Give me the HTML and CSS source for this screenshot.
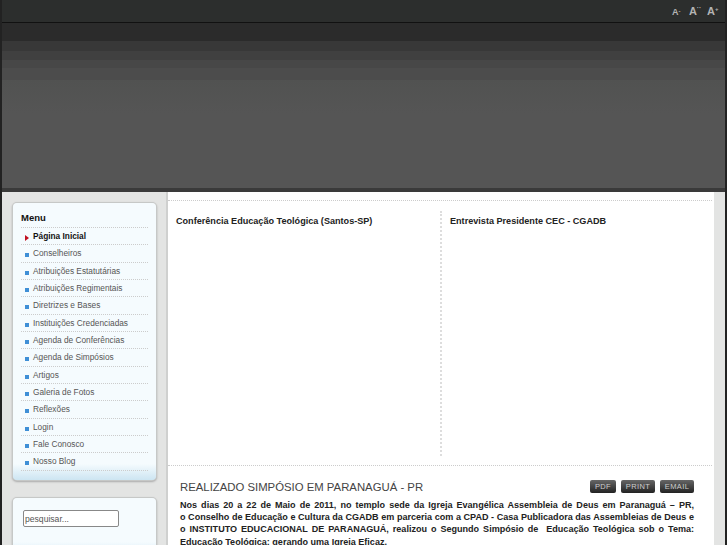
FILE: index.html
```html
<!DOCTYPE html>
<html lang="pt">
<head>
<meta charset="utf-8"/>
<title>CEC - CGADB</title>
<link rel="stylesheet" href="styles.css">
</head>
<body>
<div class="page">
  <div class="topbar">
    <a class="fs fs-small">A<sup>-</sup></a>
    <a class="fs fs-normal">A<sup>••</sup></a>
    <a class="fs fs-large">A<sup>+</sup></a>
  </div>
  <div class="header"></div>
  <div class="body">
    <div class="sidebar">
      <div class="box menu">
        <h3>Menu</h3>
        <ul>
          <li class="active">Página Inicial</li>
          <li>Conselheiros</li>
          <li>Atribuições Estatutárias</li>
          <li>Atribuições Regimentais</li>
          <li>Diretrizes e Bases</li>
          <li>Instituições Credenciadas</li>
          <li>Agenda de Conferências</li>
          <li>Agenda de Simpósios</li>
          <li>Artigos</li>
          <li>Galeria de Fotos</li>
          <li>Reflexões</li>
          <li>Login</li>
          <li>Fale Conosco</li>
          <li>Nosso Blog</li>
        </ul>
      </div>
      <div class="box search">
        <input type="text" value="pesquisar...">
      </div>
    </div>
    <div class="content">
      <div class="videos">
        <div class="video"><h4>Conferência Educação Teológica (Santos-SP)</h4></div>
        <div class="video second"><h4>Entrevista Presidente CEC - CGADB</h4></div>
      </div>
      <div class="article">
        <div class="article-head">
          <h2>REALIZADO SIMPÓSIO EM PARANAGUÁ - PR</h2>
          <div class="buttons">
            <span class="btn btn-pdf">PDF</span>
            <span class="btn">PRINT</span>
            <span class="btn">EMAIL</span>
          </div>
        </div>
        <p>Nos dias 20 a 22 de Maio de 2011, no templo sede da Igreja Evangélica Assembleia de Deus em Paranaguá – PR, o&nbsp;Conselho de Educação e Cultura da CGADB em parceria com a CPAD - Casa Publicadora das Assembleias de Deus e o INSTITUTO EDUCACIONAL DE PARANAGUÁ, realizou o Segundo Simpósio de&nbsp; Educação Teológica sob o Tema: Educação Teológica: gerando uma Igreja Eficaz.</p>
      </div>
    </div>
  </div>
</div>
</body>
</html>
```

FILE: styles.css
```css
html, body {
  margin: 0;
  height: 100%;
  overflow: hidden;
}
body {
  font-family: "Liberation Sans", Arial, sans-serif;
  background: #222;
}
.page {
  height: 545px;
  overflow: hidden;
  border-left: 2px solid #222;
  border-right: 2px solid #222;
}
/* top */
.topbar {
  height: 22px;
  background: #2c2e2d;
  border-bottom: 1px solid #111;
  display: flex;
  justify-content: flex-end;
  align-items: center;
  padding-right: 7px;
}
.fs {
  color: #b4b4b4;
  font-weight: bold;
  display: flex;
  line-height: 1;
  margin-top: 1px;
}
.fs sup {
  font-size: 6px;
  line-height: 1;
  vertical-align: baseline;
}
.fs-small { font-size: 9px; width: 17px; margin-top: 3px; }
.fs-normal { font-size: 11px; width: 18px; }
.fs-normal sup { font-size: 4px; letter-spacing: 1px; }
.fs-large { font-size: 11px; width: 11px; }
.header {
  height: 165px;
  background: linear-gradient(#2b2b2b 0, #2b2b2b 18px, #383838 18px, #383838 28px, #404040 28px, #404040 37px, #474747 37px, #474747 45px, #4c4c4c 45px, #4c4c4c 57px, #515251 57px, #555 90px, #555 100%);
  border-bottom: 4px solid #3a3a3a;
}
/* main */
.body {
  display: flex;
  background: #e3e4e3;
  height: 354px;
}
.sidebar {
  width: 153px;
  border-right: 2px solid #cfd0cf;
  padding: 11px 0 0 11px;
  flex: none;
}
.box {
  width: 143px;
  border-radius: 4px;
  background: linear-gradient(#f5fbfe 0, #f5fbfe calc(100% - 16px), #cde5f2 100%);
  box-shadow: 0 0 0 1px #c6c8c7, 0 1px 2px 1px #aaa;
}
.menu {
  height: 277px;
  padding: 9px 8px 0;
  box-sizing: border-box;
  margin-bottom: 18px;
}
.menu h3 {
  margin: 0;
  font-size: 9.5px;
  line-height: 11px;
  color: #111;
  padding-bottom: 4px;
  border-bottom: 1px dotted #ccc;
}
.menu ul {
  list-style: none;
  margin: 0;
  padding: 0;
}
.menu li {
  height: 16.35px;
  line-height: 16px;
  font-size: 8.3px;
  color: #555;
  padding-left: 12px;
  border-bottom: 1px dotted #ccc;
  position: relative;
}
.menu li::before {
  content: "";
  position: absolute;
  left: 4px;
  top: 8px;
  width: 4px;
  height: 4px;
  background: #3f8fd6;
}
.menu li.active {
  color: #111;
  font-weight: bold;
}
.menu li.active::before {
  width: 0;
  height: 0;
  top: 7px;
  left: 4px;
  background: none;
  border-left: 4px solid #c01020;
  border-top: 3px solid transparent;
  border-bottom: 3px solid transparent;
}
.search {
  height: 60px;
  padding: 12px 10px;
  box-sizing: border-box;
}
.search input {
  width: 96px;
  height: 17px;
  box-sizing: border-box;
  padding: 0 1px;
  border: 1px solid #888;
  border-radius: 2px;
  font: 8.6px "Liberation Sans", Arial, sans-serif;
  color: #555;
  background: #fff;
  display: block;
}
.content {
  width: 546px;
  background: #fff;
  flex: none;
  padding-top: 8px;
  box-sizing: border-box;
  height: 354px;
}
.videos {
  display: flex;
  margin-right: 2px;
  border-top: 1px dotted #ccc;
  border-bottom: 1px dotted #ccc;
  padding: 10px 0 9px;
  height: 245px;
}
.video {
  width: 272px;
  padding-left: 8px;
  box-sizing: border-box;
}
.video.second {
  border-left: 2px dotted #ddd;
  padding-left: 8px;
}
.video h4 {
  margin: 0;
  font-size: 9.1px;
  line-height: 20px;
  color: #222;
}
.article {
  padding: 12px 20px 0 12px;
}
.article-head {
  display: flex;
  justify-content: space-between;
  align-items: center;
  height: 17px;
}
.article-head h2 {
  margin: 0;
  font-size: 11.35px;
  font-weight: normal;
  color: #444;
}
.buttons {
  display: flex;
  gap: 5px;
}
.btn {
  width: 34px;
  height: 13px;
  line-height: 13px;
  text-align: center;
  border-radius: 2px;
  font-size: 7.5px;
  letter-spacing: .4px;
  color: #ccc;
  background: linear-gradient(#666, #222);
}
.btn-pdf {
  width: 26px;
}
.article p {
  margin: 4px 0 0;
  font-size: 9.05px;
  line-height: 12.2px;
  font-weight: bold;
  color: #222;
  text-align: justify;
}
```
